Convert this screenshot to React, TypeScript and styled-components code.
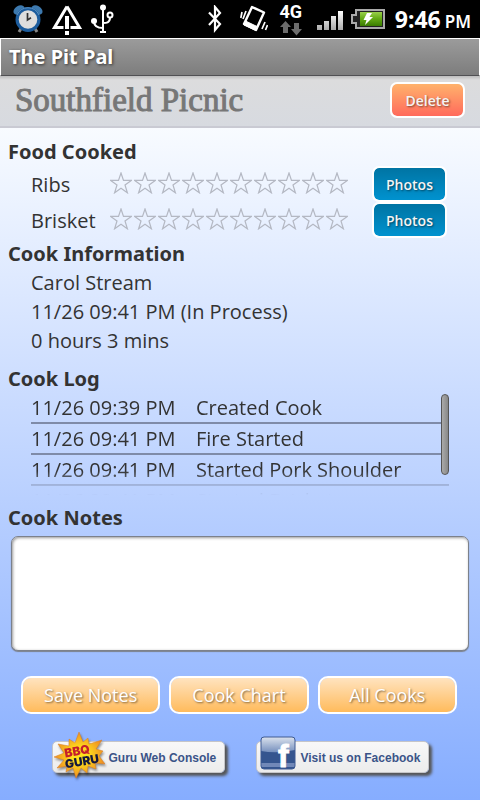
import React, { useState } from "react";
import styled, { createGlobalStyle, css } from "styled-components";

const GlobalStyle = createGlobalStyle`
  *, *::before, *::after { box-sizing: border-box; }
  body { margin: 0; font-family: "Open Sans", "Noto Sans", sans-serif; color: #333; background: #88b0ff; }
  button, textarea { font-family: inherit; }
  ul, h1, h2, p { margin: 0; padding: 0; }
  ul { list-style: none; }
`;

const Page = styled.div`
  min-height: 100vh;
  display: flex;
  flex-direction: column;
`;

const StatusBar = styled.div`
  display: flex;
  justify-content: space-between;
  align-items: center;
  height: 38px;
  padding: 0 9px 0 13px;
  background: #000;
  color: #fff;
`;

const StatusGroup = styled.div<{ $gap: number }>`
  display: flex;
  align-items: center;
  gap: ${(p) => p.$gap}px;
`;

const Icon = styled.svg`
  display: block;
  flex: none;
`;

const Network = styled.div`
  display: flex;
  flex-direction: column;
  align-items: center;
  width: 24px;
  font: 700 18px/18px Roboto, sans-serif;
  margin: 0 3px 0 0;
`;

const Clock = styled.div`
  display: flex;
  align-items: baseline;
  gap: 4px;
  margin-left: -1px;
  font: 700 23px/32px "Noto Sans", sans-serif;
  padding-top: 2px;
`;

const Meridiem = styled.span`
  font-size: 17px;
  font-weight: 600;
`;

const TitleBar = styled.div`
  height: 38px;
  padding: 0 8px;
  border: 1px solid #fff;
  border-bottom-color: #505053;
  background: linear-gradient(#9b9b9b, #7d7d7d);
  color: #fff;
  font: 700 20px/36px "Noto Sans", sans-serif;
  text-shadow: 1px 1px 3px #333;
`;

const Header = styled.header`
  display: flex;
  align-items: center;
  justify-content: space-between;
  gap: 12px;
  height: 52px;
  padding: 0 15px 2px;
  border-bottom: 2px solid #c9cad3;
  background: linear-gradient(#bcbcbc, #dcdcdd 4px, #d7dae0);
`;

const CookTitle = styled.h1`
  font: 400 33px/44px "Liberation Serif", serif;
  -webkit-text-stroke: 1px #777;
  color: #777;
`;

const buttonTone = {
  danger: "linear-gradient(#ffb26c, #ff6a5c)",
  photo: "linear-gradient(#0074a3, #0092cf)",
  action: "linear-gradient(#ffe3bf, #ffbb5c)",
};

const Button = styled.button<{ $tone: keyof typeof buttonTone }>`
  flex: none;
  height: 36px;
  padding: 0;
  border: 2px solid #fff;
  border-radius: 7px;
  background: ${(p) => buttonTone[p.$tone]} padding-box;
  color: #f4f4f4;
  font-size: 14px;
  font-weight: 600;
  text-shadow: 1px 1px 2px rgba(0, 0, 0, 0.5);
  width: 75px;
  ${(p) =>
    p.$tone === "action" &&
    css`
      flex: 1;
      height: 38px;
      border-radius: 10px;
      color: #fff;
      font-size: 18px;
      font-weight: 400;
    `}
`;

const Content = styled.main`
  flex: 1;
  padding-top: 10px;
  background: linear-gradient(#f8fbff, #86adff);
`;

const Section = styled.section<{ $top?: number }>`
  padding-top: ${(p) => p.$top ?? 0}px;
`;

const Heading = styled.h2`
  display: block;
  padding-left: 8px;
  font: 700 20px/28px "Noto Sans", sans-serif;
`;

const FoodRow = styled.li`
  display: flex;
  align-items: center;
  height: 36px;
  padding: 0 33px 0 31px;
  font-size: 20px;
`;

const FoodName = styled.span`
  width: 78px;
`;

const Stars = styled.div`
  display: flex;
  flex: 1;
`;

const StarButton = styled.button`
  display: grid;
  place-items: start center;
  width: 24px;
  height: 24px;
  padding: 0;
  border: 0;
  background: none;
`;

const InfoLine = styled.p`
  padding-left: 31px;
  font-size: 20px;
  line-height: 29px;
`;

const LogFrame = styled.div`
  position: relative;
  margin: 0 31px;
`;

const LogList = styled.ul`
  height: 102px;
  overflow: hidden;
  mask-image: linear-gradient(#000 78px, transparent 102px);
`;

const LogRow = styled.li`
  display: flex;
  gap: 15px;
  border-bottom: 2px solid #7f8ba8;
  font-size: 20px;
  line-height: 29px;
  white-space: nowrap;
`;

const LogTime = styled.time`
  width: 150px;
`;

const ScrollThumb = styled.div`
  position: absolute;
  top: 1px;
  right: 0;
  width: 8px;
  height: 81px;
  border: 1px solid #555;
  border-radius: 4px;
  background: linear-gradient(90deg, #aaa, #888);
`;

const NotesBox = styled.textarea`
  display: block;
  width: calc(100% - 22px);
  height: 115px;
  margin: 4px 11px 25px;
  padding: 8px;
  border: 1px solid #7c818b;
  border-radius: 7px;
  background: #fff;
  box-shadow: inset 1px 1px 3px #999, 0 1px 1px #7c818b;
  font-size: 20px;
  resize: none;
`;

const Actions = styled.div`
  display: flex;
  gap: 9px;
  padding: 0 23px 0 21px;
`;

const Links = styled.nav`
  display: flex;
  justify-content: center;
  gap: 31px;
  padding: 20px 0 18px;
`;

const LinkCard = styled.a`
  display: flex;
  align-items: center;
  width: 173px;
  height: 32px;
  margin-top: 7px;
  border: 1px solid #c5c5c8;
  border-radius: 5px;
  background: linear-gradient(#f8f8f8, #ececec);
  box-shadow: 3px 3px 3px #555;
  color: #3b5488;
  font: 700 12px/16px "Liberation Sans", sans-serif;
  text-decoration: none;
  white-space: nowrap;
`;

const LinkLabel = styled.span`
  padding-top: 2px;
`;

const GuruLogo = styled(Icon)`
  margin: -12px 4px -8px 0;
  filter: drop-shadow(1px 2px 1px rgba(0, 0, 0, 0.4));
`;

const FacebookLogo = styled(Icon)`
  margin: -14px 5px -6px 3px;
`;

const STAR = "M11 1 L13.5 8.4 H21.3 L15 13 L17.4 20.8 L11 16.3 L4.6 20.8 L7 13 L0.7 8.4 H8.5 Z";

function Rating({ food }: { food: string }) {
  const [value, setValue] = useState(0);
  return (
    <Stars role="group" aria-label={`${food} rating`}>
      {Array.from({ length: 10 }, (_, i) => (
        <StarButton key={i} aria-label={`${i + 1} of 10`} onClick={() => setValue(i + 1)}>
          <Icon width="22" height="22" viewBox="0 0 22 22">
            <path d={STAR} fill={i < value ? "#ffc83d" : "none"} stroke="#b4b8c3" strokeWidth="1.2" />
          </Icon>
        </StarButton>
      ))}
    </Stars>
  );
}

function AlarmIcon() {
  return (
    <Icon width="30" height="28" viewBox="0 0 30 28">
      <path d="M6 27 L9 22 M24 27 L21 22" stroke="#888" strokeWidth="3" />
      <ellipse cx="6" cy="5" rx="6" ry="4" transform="rotate(-32 6 5)" fill="#3d79ae" />
      <ellipse cx="24" cy="5" rx="6" ry="4" transform="rotate(32 24 5)" fill="#3d79ae" />
      <circle cx="15" cy="14.5" r="12.5" fill="#1c5c9d" />
      <path d="M4 10 A12 12 0 0 1 26 10" fill="none" stroke="#5b91c1" strokeWidth="1" />
      <circle cx="15" cy="14.5" r="9.3" fill="#dedede" />
      <path d="M14.5 8 V15 L18 12.8" fill="none" stroke="#333" strokeWidth="1.7" />
    </Icon>
  );
}

function WarningIcon() {
  return (
    <Icon width="32" height="33" viewBox="0 0 32 33">
      <path d="M16 3.5 L28.5 24.5 H19.5 M12.5 24.5 H3.5 L16 3.5" fill="none" stroke="#fff" strokeWidth="3" />
      <path d="M16 13 V26 M16 28 V32" stroke="#fff" strokeWidth="4" />
    </Icon>
  );
}

function UsbIcon() {
  return (
    <Icon width="23" height="30" viewBox="0 0 23 30" fill="none" stroke="#fff" strokeWidth="2">
      <path d="M12 3 V28 M9 28 H15" />
      <circle cx="12" cy="3.5" r="3" fill="#fff" stroke="none" />
      <circle cx="3" cy="17" r="3" fill="#fff" stroke="none" />
      <circle cx="19" cy="11" r="2.5" />
      <path d="M3 17 C3 23 8 24 12 24 M19 13.5 C19 19 15 19 12 19" />
    </Icon>
  );
}

function BluetoothIcon() {
  return (
    <Icon width="14" height="28" viewBox="0 0 14 28">
      <path d="M1 7.500 L12 19 L7 25 V2 L12 8 L1 20" fill="none" stroke="#fff" strokeWidth="2.2" />
    </Icon>
  );
}

function VibrateIcon() {
  return (
    <Icon width="28" height="28" viewBox="0 0 28 28" fill="none" stroke="#fff">
      <path d="M12 2 L24 7.5 L16 25 L4 19 Z" strokeWidth="2.4" strokeLinejoin="round" />
      <path d="M4 18.5 L5.5 16 L17 21.5 L16 25.5 L4 20 Z" fill="#fff" strokeWidth="1" />
      <path d="M2 7 L0.8 13 M6 6 L3 14 M22 24 L25 17 M25.5 25 L27.5 20" strokeWidth="1.7" />
    </Icon>
  );
}

function DataArrowsIcon() {
  return (
    <Icon width="22" height="15" viewBox="0 0 22 15" fill="#6c6c6c">
      <path d="M5.5 0 L11 6 H8 V12 H3 V6 H0 Z M14 2 H19 V8 H22 L16.500 14.500 L11 8 H14 Z" />
    </Icon>
  );
}

function SignalIcon() {
  return (
    <Icon width="26" height="22" viewBox="0 0 26 22">
      <defs>
        <linearGradient id="bars" x1="0" y1="0" x2="0" y2="1">
          <stop offset="0" stopColor="#fff" />
          <stop offset="1" stopColor="#aaa" />
        </linearGradient>
      </defs>
      <path d="M0 17 H5 V22 H0 Z M7 13 H12 V22 H7 Z M14 8 H19 V22 H14 Z M21 3 H26 V22 H21 Z" fill="url(#bars)" />
    </Icon>
  );
}

function BatteryIcon() {
  return (
    <Icon width="34" height="20" viewBox="0 0 34 20">
      <defs>
        <linearGradient id="charge" x1="0" y1="0" x2="0" y2="1">
          <stop offset="0" stopColor="#9ad04c" />
          <stop offset="0.45" stopColor="#66ad16" />
          <stop offset="1" stopColor="#397c00" />
        </linearGradient>
      </defs>
      <path d="M5 1 H33 V19 H5 V14 H1 V6 H5 Z" fill="#222" stroke="#aaa" strokeWidth="2" />
      <path d="M9 3 H31 V17 H9 Z" fill="url(#charge)" />
      <path d="M16 4 H21 L18.500 8 H22 L14 16 L15.500 11 H12.500 Z" fill="#fff" />
    </Icon>
  );
}

function Burst() {
  return (
    <GuruLogo width="52" height="48" viewBox="0 0 52 48" aria-hidden="true">
      <defs>
        <radialGradient id="burst">
          <stop offset="0.3" stopColor="#ffe11c" />
          <stop offset="1" stopColor="#ee8d22" />
        </radialGradient>
      </defs>
      <path
        d="M26 1 L30 11 L35 7 L36 13 L49 9 L43 18 L50 20 L46 25 L52 33 L42 32 L43 38 L35 35 L34 42 L28 37 L23 47 L20 37 L13 41 L14 35 L4 37 L11 29 L1 26 L11 22 L5 13 L16 15 L16 8 L22 12 Z"
        fill="url(#burst)"
        stroke="#d47b24"
        strokeWidth="0.5"
      />
      <g transform="rotate(-10 26 25)" fontFamily="Inter, sans-serif" fontWeight="900" textAnchor="middle">
        <text x="25" y="24" fontSize="12" fill="#c51f2b">BBQ</text>
        <text x="28" y="35" fontSize="12" fill="#15183c">GURU</text>
      </g>
    </GuruLogo>
  );
}

function FacebookMark() {
  return (
    <FacebookLogo width="36" height="34" viewBox="0 0 36 34" aria-hidden="true">
      <defs>
        <linearGradient id="gloss" x1="0" y1="0" x2="0" y2="1">
          <stop offset="0" stopColor="#dbe2ed" />
          <stop offset="1" stopColor="#758fbd" />
        </linearGradient>
        <clipPath id="tile"><rect x="1" y="1" width="34" height="32" rx="3" /></clipPath>
      </defs>
      <rect x="1" y="1" width="34" height="32" rx="3" fill="#35558f" />
      <g clipPath="url(#tile)">
        <path d="M1 1 H35 V14 Q17 18 1 15 Z" fill="url(#gloss)" />
        <rect x="1" y="27" width="34" height="4" fill="#7188b8" />
        <text x="18" y="31" fontFamily="Liberation Sans, sans-serif" fontWeight="700" fontSize="32" fill="#fff" stroke="#fff">f</text>
      </g>
      <rect x="1" y="1" width="34" height="32" rx="3" fill="none" stroke="#3e5b93" />
    </FacebookLogo>
  );
}

const foods = ["Ribs", "Brisket"];
const info = ["Carol Stream", "11/26 09:41 PM (In Process)", "0 hours 3 mins"];
const log = [
  ["11/26 09:39 PM", "Created Cook"],
  ["11/26 09:41 PM", "Fire Started"],
  ["11/26 09:41 PM", "Started Pork Shoulder"],
  ["11/26 09:41 PM", "Started Brisket"],
];

export default function App() {
  return (
    <Page>
      <GlobalStyle />
      <StatusBar>
        <StatusGroup $gap={8}>
          <AlarmIcon />
          <WarningIcon />
          <UsbIcon />
        </StatusGroup>
        <StatusGroup $gap={11}>
          <StatusGroup $gap={18}>
            <BluetoothIcon />
            <VibrateIcon />
          </StatusGroup>
          <Network>
            4G
            <DataArrowsIcon />
          </Network>
          <StatusGroup $gap={8}>
            <SignalIcon />
            <BatteryIcon />
          </StatusGroup>
          <Clock>
            9:46 <Meridiem>PM</Meridiem>
          </Clock>
        </StatusGroup>
      </StatusBar>
      <TitleBar>The Pit Pal</TitleBar>
      <Header>
        <CookTitle>Southfield Picnic</CookTitle>
        <Button $tone="danger">Delete</Button>
      </Header>
      <Content>
        <Section>
          <Heading>Food Cooked</Heading>
          <ul>
            {foods.map((food) => (
              <FoodRow key={food}>
                <FoodName>{food}</FoodName>
                <Rating food={food} />
                <Button $tone="photo">Photos</Button>
              </FoodRow>
            ))}
          </ul>
        </Section>
        <Section $top={2}>
          <Heading>Cook Information</Heading>
          {info.map((line) => (
            <InfoLine key={line}>{line}</InfoLine>
          ))}
        </Section>
        <Section $top={10}>
          <Heading>Cook Log</Heading>
          <LogFrame>
            <LogList>
              {log.map(([time, event]) => (
                <LogRow key={event}>
                  <LogTime>{time}</LogTime>
                  <span>{event}</span>
                </LogRow>
              ))}
            </LogList>
            <ScrollThumb />
          </LogFrame>
        </Section>
        <Section $top={9}>
          <Heading as="label" htmlFor="notes">Cook Notes</Heading>
          <NotesBox id="notes" />
        </Section>
        <Actions>
          <Button $tone="action">Save Notes</Button>
          <Button $tone="action">Cook Chart</Button>
          <Button $tone="action">All Cooks</Button>
        </Actions>
        <Links>
          <LinkCard href="#guru">
            <Burst />
            <LinkLabel>Guru Web Console</LinkLabel>
          </LinkCard>
          <LinkCard href="#facebook">
            <FacebookMark />
            <LinkLabel>Visit us on Facebook</LinkLabel>
          </LinkCard>
        </Links>
      </Content>
    </Page>
  );
}
